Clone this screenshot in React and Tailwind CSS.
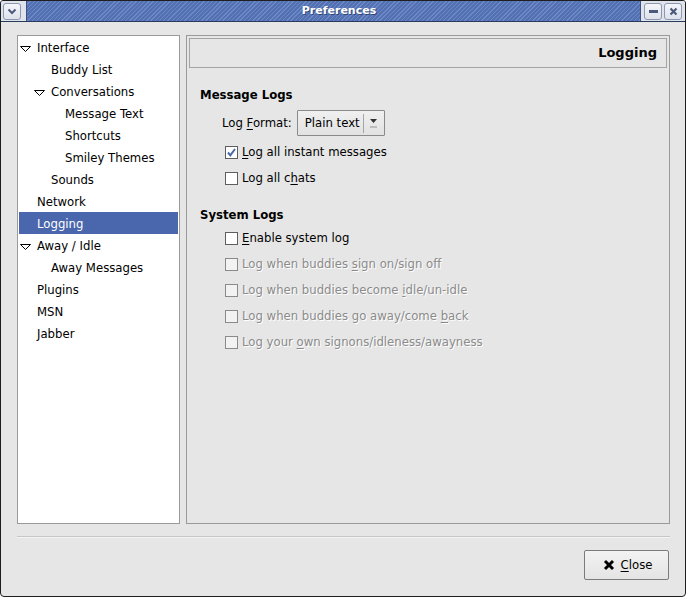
import React from 'react';

const font = { fontFamily: '"DejaVu Sans", "Liberation Sans", sans-serif' };

const treeItems = [
  { label: 'Interface', level: 0, expander: true },
  { label: 'Buddy List', level: 1 },
  { label: 'Conversations', level: 1, expander: true },
  { label: 'Message Text', level: 2 },
  { label: 'Shortcuts', level: 2 },
  { label: 'Smiley Themes', level: 2 },
  { label: 'Sounds', level: 1 },
  { label: 'Network', level: 0 },
  { label: 'Logging', level: 0, selected: true },
  { label: 'Away / Idle', level: 0, expander: true },
  { label: 'Away Messages', level: 1 },
  { label: 'Plugins', level: 0 },
  { label: 'MSN', level: 0 },
  { label: 'Jabber', level: 0 },
];

const indents = ['pl-[18px]', 'pl-[32px]', 'pl-[46px]'];

const Expander = () => (
  <svg width="11" height="7" viewBox="0 0 11 7" className="absolute left-[-17px] top-[5px]">
    <polygon points="0.5,0.5 10.5,0.5 5.5,5.5" fill="none" stroke="#000" strokeWidth="1" />
  </svg>
);

const TitleButton = ({ children }) => (
  <div className="w-[18px] h-[17px] rounded-[3px] border border-[#8d97ae] bg-gradient-to-b from-[#f4f6fa] to-[#dde2ec] flex items-center justify-center">
    {children}
  </div>
);

// mnemonic underline helper
const U = ({ children }) => <span className="underline underline-offset-2">{children}</span>;

const Checkbox = ({ checked, disabled }) => (
  <div
    className={`w-[13px] h-[13px] border flex items-center justify-center shrink-0 ${
      disabled ? 'border-[#8a8a8a] bg-[#f2f2f2]' : 'border-[#5e5e5e] bg-white'
    }`}
  >
    {checked && (
      <svg width="11" height="11" viewBox="0 0 11 11">
        <path d="M2 5.5 L4.3 8.3 L9 2" fill="none" stroke="#4a66ac" strokeWidth="2" />
      </svg>
    )}
  </div>
);

const CheckRow = ({ checked, disabled, children }) => (
  <div className="h-[26px] flex items-center pl-[25px] gap-[4px]">
    <Checkbox checked={checked} disabled={disabled} />
    <span className={disabled ? 'text-[#8b8b8b] [text-shadow:1px_1px_0_#fff]' : 'text-black'}>{children}</span>
  </div>
);

export default function App() {
  return (
    <div
      className="w-[686px] h-[597px] bg-[#e6e6e6] border border-[#1e1e1e] rounded-t-[3px] rounded-b-[4px] flex flex-col text-[11.7px] leading-[14px] text-black overflow-hidden"
      style={font}
    >
      {/* Title bar */}
      <div className="h-[21px] flex border-b border-[#2a3a5e] shrink-0">
        <div className="w-[25px] bg-[#dfe3ec] flex items-center pl-[2px]">
          <TitleButton>
            <svg width="10" height="7" viewBox="0 0 10 7">
              <path d="M1.5 1.5 L5 5 L8.5 1.5" fill="none" stroke="#4b5a7a" strokeWidth="2" />
            </svg>
          </TitleButton>
        </div>
        <div className="flex-1 bg-[repeating-linear-gradient(135deg,#5371b2_0px,#5371b2_2px,#6c89c6_2px,#6c89c6_3px)] flex items-center justify-center pl-[11px] border-l border-[#3c5285]">
          <span className="text-white font-bold text-[11px] [text-shadow:1px_1px_0_#2f4577]">Preferences</span>
        </div>
        <div className="w-[45px] bg-[#dfe3ec] flex items-center gap-[2px] pl-[3px] border-l border-[#3c5285]">
          <TitleButton>
            <div className="w-[9px] h-[3px] bg-[#4b5a7a]" />
          </TitleButton>
          <TitleButton>
            <svg width="9" height="9" viewBox="0 0 9 9">
              <path d="M1.5 1.5 L7.5 7.5 M7.5 1.5 L1.5 7.5" fill="none" stroke="#4b5a7a" strokeWidth="2.2" />
            </svg>
          </TitleButton>
        </div>
      </div>

      {/* Body */}
      <div className="flex-1 flex flex-col pt-[13px] pl-[16px] pr-[15px]">
        <div className="h-[489px] flex gap-[6px]">
          {/* Tree */}
          <div className="w-[163px] bg-white border border-[#9a9a9a] px-[1px]">
            {treeItems.map((item) => (
              <div
                key={item.label}
                className={`h-[22px] flex items-center pt-[1px] ${indents[item.level]} ${
                  item.selected ? 'bg-[#4a66ac] text-white' : ''
                }`}
              >
                <span className="relative">
                  {item.expander && <Expander />}
                  {item.label}
                </span>
              </div>
            ))}
          </div>

          {/* Content panel */}
          <div className="flex-1 border border-[#9a9a9a] p-[2px] flex flex-col">
            <div className="h-[30px] border border-[#a3a3a3] flex items-center justify-end pr-[9px]">
              <span className="font-bold text-[13px]">Logging</span>
            </div>
            <div className="pl-[11px] pt-[20px]">
              <div className="h-[14px] font-bold">Message Logs</div>
              <div className="mt-[8px] h-[26px] flex items-center pl-[22px] gap-[5px]">
                <span>
                  Log <U>F</U>ormat:
                </span>
                <div className="w-[88px] h-[26px] border border-[#8a8a8a] bg-gradient-to-b from-[#f0f0f0] to-[#e2e2e2] flex items-center rounded-[1px]">
                  <span className="flex-1 pl-[7px]">Plain text</span>
                  <div className="w-px h-[19px] bg-[#a6a6a6]" />
                  <div className="w-[20px] flex flex-col items-center justify-center gap-[2px]">
                    <svg width="7" height="5" viewBox="0 0 7 5">
                      <polygon points="0,0 7,0 3.5,4" fill="#333" />
                    </svg>
                    <div className="w-[7px] h-[2px] bg-[#bdbdbd]" />
                  </div>
                </div>
              </div>
              <div className="mt-[3px]">
                <CheckRow checked>
                  <U>L</U>og all instant messages
                </CheckRow>
                <CheckRow>
                  Log all c<U>h</U>ats
                </CheckRow>
              </div>
              <div className="mt-[17px] h-[14px] font-bold">System Logs</div>
              <div className="mt-[3px]">
                <CheckRow>
                  <U>E</U>nable system log
                </CheckRow>
                <CheckRow disabled>
                  Log when buddies <U>s</U>ign on/sign off
                </CheckRow>
                <CheckRow disabled>
                  Log when buddies become <U>i</U>dle/un-idle
                </CheckRow>
                <CheckRow disabled>
                  Log when buddies go away/come <U>b</U>ack
                </CheckRow>
                <CheckRow disabled>
                  Log your <U>o</U>wn signons/idleness/awayness
                </CheckRow>
              </div>
            </div>
          </div>
        </div>

        {/* Separator */}
        <div className="mt-[12px] h-[2px] border-t border-[#c6c6c6] border-b border-b-[#f4f4f4]" />

        {/* Buttons */}
        <div className="mt-[12px] flex justify-end pr-[1px]">
          <button className="w-[85px] h-[30px] border border-[#7b7b7b] rounded-[2px] bg-gradient-to-b from-[#f2f2f2] to-[#e4e4e4] flex items-center justify-center gap-[6px] pl-[2px]">
            <svg width="12" height="12" viewBox="0 0 12 12">
              <path d="M2 2 L10 10 M10 2 L2 10" fill="none" stroke="#000" strokeWidth="3" />
            </svg>
            <span>
              <U>C</U>lose
            </span>
          </button>
        </div>
      </div>
    </div>
  );
}
